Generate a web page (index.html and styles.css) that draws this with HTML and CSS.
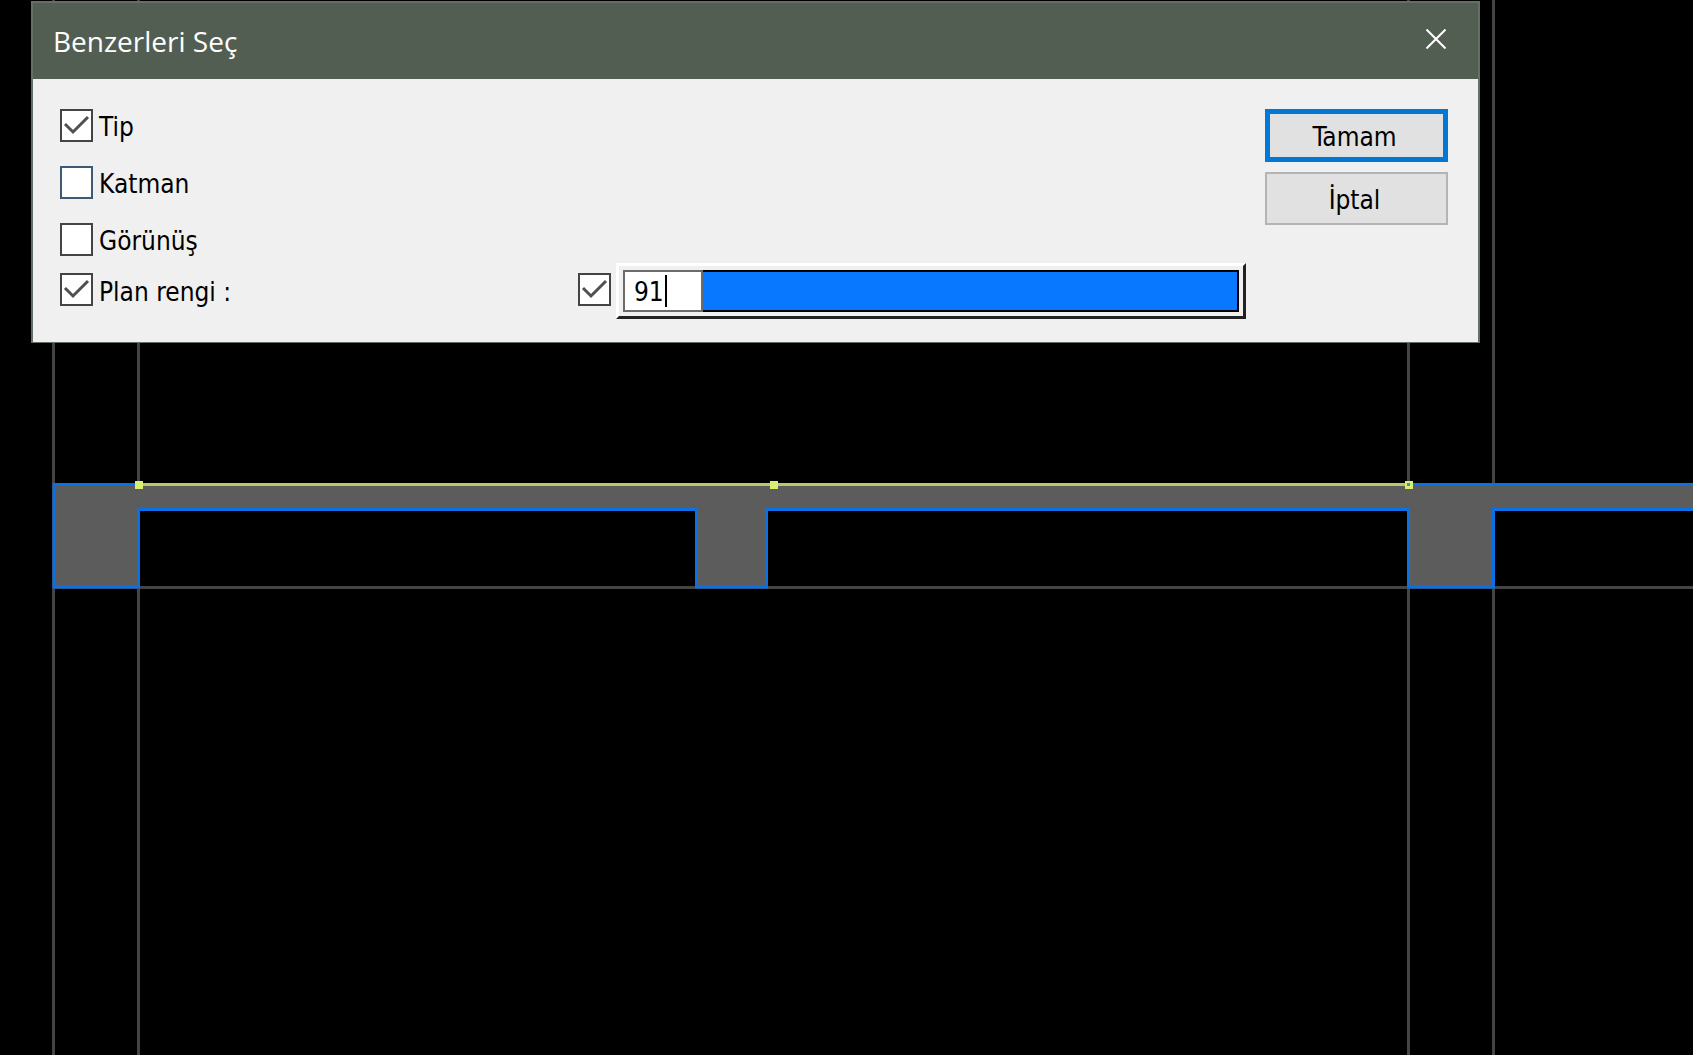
FILE: index.html
```
<!DOCTYPE html>
<html lang="tr">
<head>
<meta charset="UTF-8" />
<meta name="viewport" content="width=device-width, initial-scale=1" />
<title>Benzerleri Seç</title>
<link rel="stylesheet" href="styles.css">
</head>

<body>

<!-- Section drawing -->
<svg class="drawing" viewBox="0 0 1693 1055" preserveAspectRatio="xMinYMin slice" aria-hidden="true">
  <path class="guide" d="M53.5 0V1055M138.5 0V1055M1408.5 0V1055M1493.5 0V1055M54 587.5H1693" />
  <path class="slab" d="M1700 484.5H54V587H138.5V509.5H696.5V587H766.5V509.5H1408.5V587H1493.5V509.5H1700Z" />
  <path class="selected" d="M139 484.5H1409" />
  <rect class="grip" x="135" y="481" width="8" height="8" />
  <rect class="grip" x="770" y="481" width="8" height="8" />
  <rect class="grip" x="1405" y="481" width="8" height="8" />
  <rect class="grip-hole" x="1407" y="483" width="3" height="3" />
</svg>

<form class="dialog" role="dialog" aria-labelledby="dialog-title">
  <header class="title-bar">
    <h1 id="dialog-title">Benzerleri Seç</h1>
    <button type="button" class="close" aria-label="Kapat">
      <svg width="20" height="20" viewBox="0 0 20 20"><path d="M0.5 0.5L19.5 19.5M19.5 0.5L0.5 19.5" /></svg>
    </button>
  </header>

  <div class="dialog-body">
    <div class="fields">
      <div class="options">
        <label class="option"><input type="checkbox" checked /><span>Tip</span></label>
        <label class="option"><input type="checkbox" class="hot" /><span>Katman</span></label>
        <label class="option"><input type="checkbox" /><span>Görünüş</span></label>
      </div>
      <div class="color-row">
        <label class="option"><input type="checkbox" checked /><span>Plan rengi :</span></label>
        <div class="color-value">
          <input type="checkbox" checked aria-label="Plan rengini kullan" />
          <div class="color-frame">
            <div class="number">
              <input type="text" value="91" aria-label="Renk numarası" />
              <span class="caret"></span>
            </div>
            <button type="button" class="swatch" aria-label="Renk seç"></button>
          </div>
        </div>
      </div>
    </div>

    <div class="actions">
      <button type="submit" class="btn default">Tamam</button>
      <button type="button" class="btn">İptal</button>
    </div>
  </div>
</form>

</body>
</html>
```

FILE: styles.css
```
:root {
  --title-bg: #535e53;
  --frame: #647066;
  --face: #f0f0f0;
  --blue: #0778ff;
  --accent: #0078d7;
}
*, *::before, *::after {
  box-sizing: border-box;
}
html, body {
  margin: 0;
  height: 100%;
  overflow: hidden;
  background: #000;
  font-family: Tahoma, "DejaVu Sans Condensed", "Noto Sans", sans-serif;
}
button, input {
  font: inherit;
  margin: 0;
}

/* Drawing */
.drawing {
  display: block;
  width: 100%;
  height: 100%;
}
.guide {
  fill: none;
  stroke: #444;
  stroke-width: 3;
}
.slab {
  fill: #5c5c5c;
  stroke: #0b70e4;
  stroke-width: 3;
}
.selected {
  stroke: #b9c869;
  stroke-width: 3;
}
.grip {
  fill: #d9ee73;
}
.grip-hole {
  fill: #3c91b5;
}

/* Dialog window */
.dialog {
  position: absolute;
  top: 1px;
  left: 31px;
  right: 213px;
  border: 2px solid var(--frame);
  border-bottom-width: 1px;
  background: var(--face);
  color: #000;
  font-size: 26px;
}
.title-bar {
  display: flex;
  justify-content: space-between;
  align-items: center;
  height: 76px;
  padding: 0 32px 0 20px;
  background: var(--title-bg);
  color: #fff;
}
.title-bar h1 {
  margin: 0;
  font-family: "Segoe UI", "Open Sans", sans-serif;
  font-size: 28px;
  font-weight: 400;
}
.close {
  display: flex;
  padding: 0 0 4px;
  border: none;
  background: none;
}
.close path {
  stroke: #fff;
  stroke-width: 2;
}
.dialog-body {
  display: grid;
  grid-template-columns: 1fr 183px;
  gap: 19px;
  padding: 30px 30px 23px 27px;
}

/* Check boxes */
.options {
  display: flex;
  flex-direction: column;
  gap: 24px;
}
.option {
  display: flex;
  align-items: center;
  gap: 6px;
  height: 33px;
  line-height: 33px;
}
.option span {
  padding-top: 3px;
}
input[type="checkbox"] {
  appearance: none;
  flex: none;
  width: 33px;
  height: 33px;
  border: 2px solid #444;
  background: #fff;
}
input[type="checkbox"].hot {
  border-color: #3d5a75;
}
input[type="checkbox"]:checked {
  background: #fff url("data:image/svg+xml,%3Csvg xmlns='http://www.w3.org/2000/svg' viewBox='0 0 29 29'%3E%3Cpath d='M3 13L11 21L26 6' fill='none' stroke='%23505050' stroke-width='3'/%3E%3C/svg%3E");
}

/* Colour picker */
.color-row {
  display: grid;
  grid-template-columns: 7fr 9fr;
  align-items: center;
  margin-top: 7px;
}
.color-row input[type="checkbox"] {
  margin-bottom: 4px;
}
.color-value {
  display: flex;
  align-items: center;
  gap: 5px;
  margin-left: -1px;
}
.color-frame {
  display: flex;
  flex: 1;
  height: 56px;
  padding: 4px;
  border: 3px solid;
  border-color: #fff #222 #222 #fff;
}
.number {
  position: relative;
  width: 80px;
}
.number input {
  width: 100%;
  height: 100%;
  padding: 2px 9px 0;
  border: 2px solid #6b6b6b;
  border-radius: 0;
  background: #fff;
  color: #000;
}
.caret {
  position: absolute;
  top: 5px;
  left: 42px;
  width: 2px;
  height: 32px;
  background: #000;
}
.swatch {
  flex: 1;
  border: 2px solid #000;
  border-left: none;
  background: var(--blue);
}

/* Buttons */
.actions {
  display: flex;
  flex-direction: column;
  gap: 10px;
}
.btn {
  height: 53px;
  padding: 3px 4px 0 0;
  border: 2px solid #b4b4b4;
  background: #e1e1e1;
  color: #000;
}
.btn.default {
  border: 5px solid var(--accent);
}
```
